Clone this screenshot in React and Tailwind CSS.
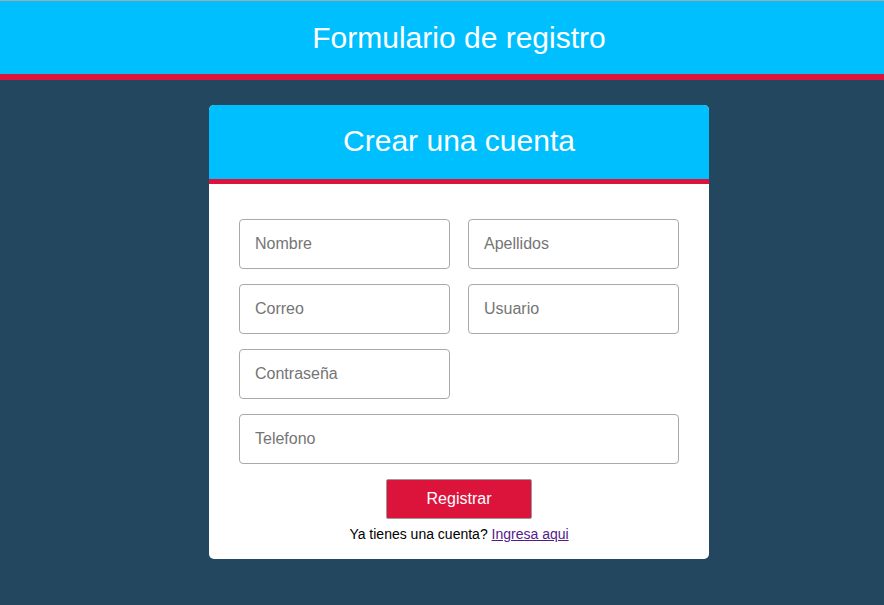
import React from "react";

export default function App() {
  const inputCls =
    "h-[50px] w-full rounded-[4px] border border-[#a9a9a9] bg-white px-[15px] text-[16px] text-black placeholder:text-[#757575] outline-none";
  return (
    <div
      className="min-h-[605px] w-full overflow-hidden bg-[#22475f] border-t border-[#a8a8a8]"
      style={{ fontFamily: '"Liberation Sans", Arial, sans-serif' }}
    >
      <header className="flex h-[79px] items-center justify-center border-b-[6px] border-[#dc143c] bg-[#00bfff] pl-[34px]">
        <h1 className="text-[30px] font-normal text-white leading-none pt-[1px]">Formulario de registro</h1>
      </header>
      <div className="flex justify-center pt-[25px] pl-[34px]">
        <div className="w-[500px] overflow-hidden rounded-[5px] bg-white">
          <div className="flex h-[79px] items-center justify-center border-b-[5px] border-[#dc143c] bg-[#00bfff]">
            <h2 className="text-[30px] font-normal text-white leading-none pb-[2px]">Crear una cuenta</h2>
          </div>
          <form className="px-[30px] pt-[35px] pb-[16px]" onSubmit={(e) => e.preventDefault()}>
            <div className="grid grid-cols-2 gap-x-[18px] gap-y-[15px]">
              <input className={inputCls} placeholder="Nombre" />
              <input className={inputCls} placeholder="Apellidos" />
              <input className={inputCls} placeholder="Correo" />
              <input className={inputCls} placeholder="Usuario" />
              <input className={inputCls} placeholder="Contraseña" type="text" />
              <div />
              <input className={`${inputCls} col-span-2`} placeholder="Telefono" />
            </div>
            <div className="mt-[15px] flex flex-col items-center">
              <button
                type="submit"
                className="h-[40px] w-[146px] rounded-[2px] border border-[#9a9a9a] bg-[#dc143c] text-[16px] text-white"
              >
                Registrar
              </button>
              <p className="mt-[6px] text-[14px] leading-[18px] text-black">
                Ya tienes una cuenta?{" "}
                <a href="#" className="text-[#551a8b] underline">
                  Ingresa aqui
                </a>
              </p>
            </div>
          </form>
        </div>
      </div>
    </div>
  );
}
